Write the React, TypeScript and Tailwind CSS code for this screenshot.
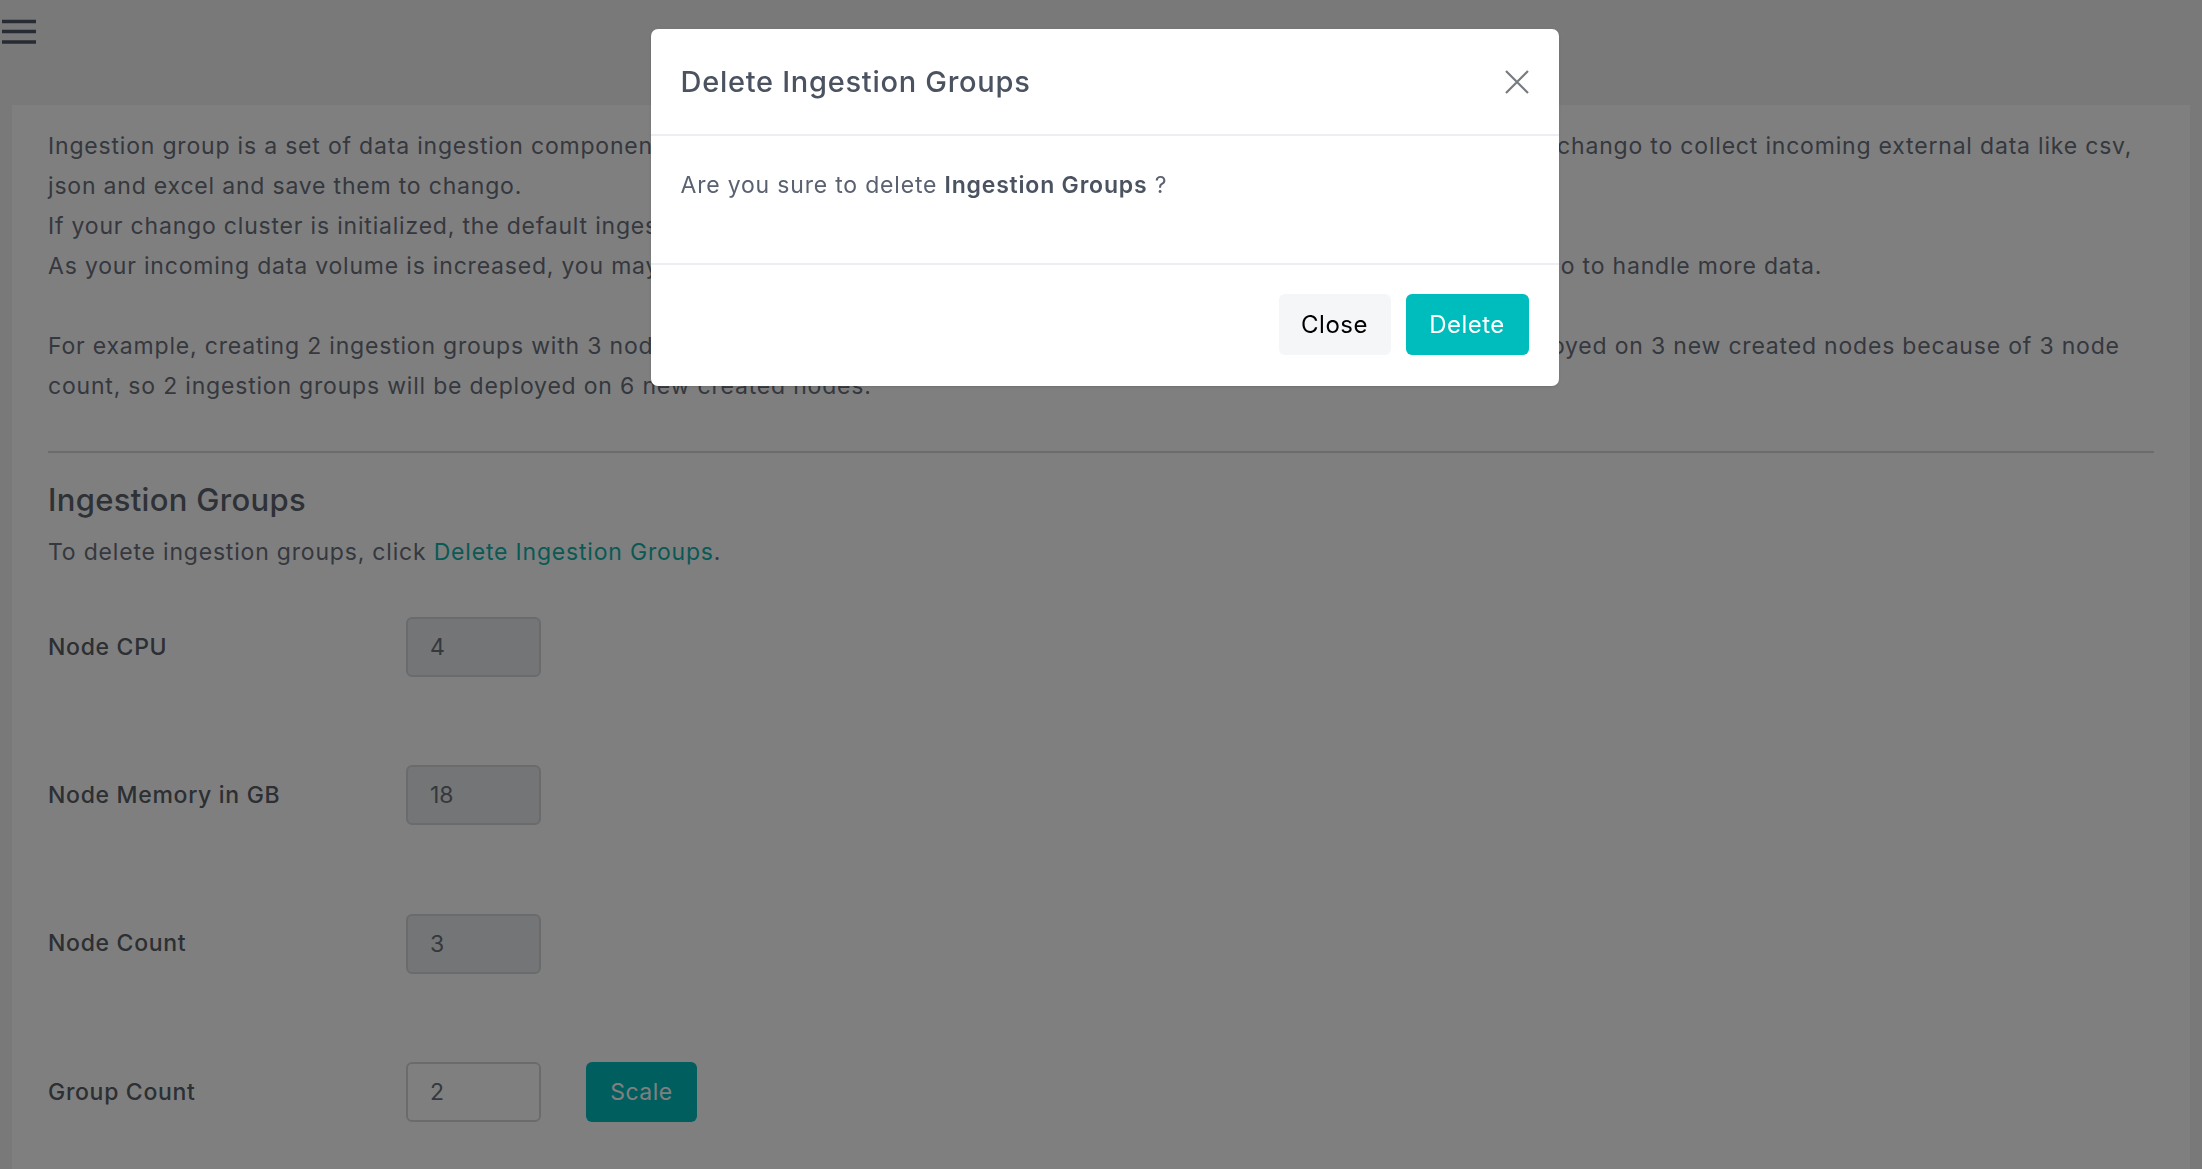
import React from "react";

const fields = [
  { label: "Node CPU", value: "4", disabled: true },
  { label: "Node Memory in GB", value: "18", disabled: true },
  { label: "Node Count", value: "3", disabled: true },
  { label: "Group Count", value: "2", disabled: false },
];

function DeleteModal() {
  return (
    <div className="fixed inset-0 z-20 flex justify-center items-start pt-[29px] pl-[7px]">
      <div className="w-[908px] bg-white rounded-[7px] shadow-sm">
        <div className="flex items-center justify-between px-[30px] h-[107px] border-b-2 border-[#eceef1]">
          <h2 className="text-[29px] font-medium text-[#4b5361] tracking-[0.025em]">Delete Ingestion Groups</h2>
          <button className="text-[#777b80]">
            <svg width="24" height="24" viewBox="0 0 24 24" fill="none" stroke="currentColor" strokeWidth="2.2">
              <path d="M1 1L23 23M23 1L1 23" />
            </svg>
          </button>
        </div>
        <div className="px-[30px] pt-[33px] h-[129px] border-b-2 border-[#eceef1]">
          <p className="text-[23px] leading-[32px] text-[#5a6170] tracking-[0.035em]">
            Are you sure to delete <span className="font-semibold text-[#4b5361]">Ingestion Groups</span> ?
          </p>
        </div>
        <div className="flex justify-end gap-[15px] px-[30px] pt-[29px] pb-[31px]">
          <button className="w-[112px] h-[61px] rounded-[6px] bg-[#f5f6f8] text-[24px] tracking-[0.02em] text-black">
            Close
          </button>
          <button className="w-[123px] h-[61px] rounded-[6px] bg-[#00bdbd] text-[24px] tracking-[0.02em] text-white">
            Delete
          </button>
        </div>
      </div>
    </div>
  );
}

export default function App() {
  return (
    <div className="min-h-screen bg-[#f2f2f2] font-['Inter',sans-serif]">
      <header className="h-[105px] pt-[19px] pl-[2px]">
        <svg width="34" height="26" viewBox="0 0 34 26" fill="none" stroke="#4f5868" strokeWidth="3.4">
          <path d="M0 2.5H34M0 12.5H34M0 23H34" />
        </svg>
      </header>

      <main className="mx-[12px] bg-white px-[36px] pt-[21px] pb-[80px] min-h-[1064px]">
        <p className="text-[23px] leading-[40px] text-[#6b717c] tracking-[0.035em]">
          Ingestion group is a set of data ingestion components like chango data apis and chango streaming that are
          deployed on nodes of chango to collect incoming external data like csv, json and excel and save them to chango.
          <br />
          If your chango cluster is initialized, the default ingestion group with 3 nodes has been created.
          <br />
          As your incoming data volume is increased, you may need to create more ingestion groups and add them into the
          cluster of chango to handle more data.
          <br />
          <br />
          For example, creating 2 ingestion groups with 3 node count, 4 cpu and 18GB memory per node, each ingestion group
          will be deployed on 3 new created nodes because of 3 node count, so 2 ingestion groups will be deployed on 6 new
          created nodes.
        </p>

        <hr className="mt-[45px] border-t-2 border-[#d6d6d6]" />

        <h3 className="mt-[27px] text-[31px] leading-[40px] font-medium text-[#5d636c] tracking-[0.01em]">
          Ingestion Groups
        </h3>
        <p className="mt-[12px] text-[23px] leading-[40px] text-[#6b717c] tracking-[0.035em]">
          To delete ingestion groups, click{" "}
          <a href="#" className="text-[#12b3aa]">
            Delete Ingestion Groups
          </a>
          .
        </p>

        <div className="mt-[45px] flex flex-col gap-[88.3px]">
          {fields.map((f) => (
            <div key={f.label} className="flex items-center">
              <label className="w-[358px] text-[23px] font-medium text-[#585e66] tracking-[0.03em]">{f.label}</label>
              <input
                readOnly
                disabled={f.disabled}
                value={f.value}
                className={
                  f.disabled
                    ? "w-[135px] h-[60px] rounded-[6px] border-2 border-[#d3d7db] bg-[#e8eaec] px-[22px] text-[23px] text-[#6b7078]"
                    : "w-[135px] h-[60px] rounded-[6px] border-2 border-[#d3d7db] bg-white px-[22px] text-[23px] text-[#6b7078]"
                }
              />
              {!f.disabled && (
                <button className="ml-[45px] w-[111px] h-[60px] rounded-[6px] bg-[#00bdbd] text-[23px] tracking-[0.02em] text-white">
                  Scale
                </button>
              )}
            </div>
          ))}
        </div>
      </main>

      <div className="fixed inset-0 z-10 bg-black/50" />
      <DeleteModal />
    </div>
  );
}
